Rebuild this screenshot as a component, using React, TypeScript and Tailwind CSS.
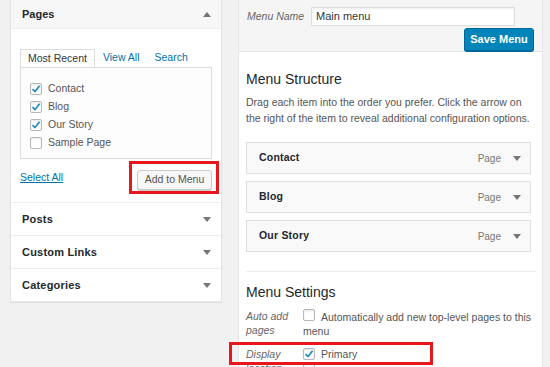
// Ekran edycji menu: lewa kolumna z metaboksami, prawa z menu i ustawieniami.

const FONT = "font-['Liberation_Sans',Arial,sans-serif]";

function Check({ checked = false }: { checked?: boolean }) {
  return (
    <span className="inline-flex h-[12px] w-[12px] shrink-0 items-center justify-center rounded-[2px] border border-[#b4b9be] bg-white shadow-[inset_0_1px_2px_rgba(0,0,0,0.1)]">
      {checked && (
        <svg width="10" height="10" viewBox="0 0 10 10">
          <path d="M1.5 5.2 L4 7.6 L8.6 1.8" fill="none" stroke="#1e8cbe" strokeWidth="1.7" />
        </svg>
      )}
    </span>
  );
}

function Arrow({ up = false }: { up?: boolean }) {
  return (
    <svg width="8" height="5" viewBox="0 0 8 5">
      <polygon points={up ? "0,5 8,5 4,0" : "0,0 8,0 4,5"} fill="#72777c" />
    </svg>
  );
}

const PAGES = [
  { label: "Contact", checked: true },
  { label: "Blog", checked: true },
  { label: "Our Story", checked: true },
  { label: "Sample Page", checked: false },
];

const MENU_ITEMS = ["Contact", "Blog", "Our Story"];

const SECTIONS = ["Posts", "Custom Links", "Categories"];

export default function App() {
  return (
    <div className={`flex h-[367px] w-[550px] gap-[16px] overflow-hidden bg-[#f1f1f1] pl-[10px] ${FONT}`}>
      {/* lewa kolumna */}
      <div className="w-[212px] shrink-0">
        <div className="border border-t-0 border-[#e5e5e5] bg-white shadow-[0_1px_1px_rgba(0,0,0,0.06)]">
          <div className="flex h-[29px] items-center justify-between border-b border-[#eee] bg-[#f7f7f7] pl-[11px] pr-[10px]">
            <h3 className="text-[11px] font-bold text-[#23282d]">Pages</h3>
            <Arrow up />
          </div>
          <div className="px-[9px] pb-[12px] pt-[20px]">
            <div className="flex h-[18px] items-stretch text-[10.5px]">
              <span className="flex items-center border border-b-0 border-[#ddd] bg-white px-[7px] text-[#32373c]">Most Recent</span>
              <span className="ml-[8px] flex items-center text-[#0073aa]">View All</span>
              <span className="ml-[15px] flex items-center text-[#0073aa]">Search</span>
            </div>
            <div className="flex h-[92px] flex-col border border-[#ddd] bg-[#fdfdfd] pl-[9px] pt-[12px]">
              {PAGES.map((p) => (
                <label key={p.label} className="flex h-[18px] items-center gap-[6px] text-[10.5px] text-[#555]">
                  <Check checked={p.checked} />
                  <span>{p.label}</span>
                </label>
              ))}
            </div>
            <div className="mt-[7px] flex items-center justify-between">
              <a className="text-[10.5px] text-[#0073aa] underline">Select All</a>
              <div className="relative">
                <button className="h-[20px] w-[75px] rounded-[3px] border border-[#ccc] bg-[#f7f7f7] text-[10.5px] text-[#555] shadow-[0_1px_0_#ccc]">
                  Add to Menu
                </button>
                <div className="pointer-events-none absolute -bottom-[4px] -left-[8px] -right-[7px] -top-[5px] border-[3px] border-[#e8171c]" />
              </div>
            </div>
          </div>
          {SECTIONS.map((s) => (
            <div key={s} className="flex h-[33px] items-center justify-between border-t border-[#eee] pl-[11px] pr-[10px]">
              <h3 className="text-[11px] font-bold tracking-[0.2px] text-[#23282d]">{s}</h3>
              <Arrow />
            </div>
          ))}
        </div>
      </div>

      {/* prawa kolumna */}
      <div className="flex w-[305px] shrink-0 flex-col border-x border-[#e5e5e5]">
        <div className="h-[58px] border-b border-[#e5e5e5] bg-[#f5f5f5] pl-[8px] pr-[8px] pt-[7px]">
          <div className="flex items-center">
            <span className="w-[64px] text-[10.5px] italic text-[#666]">Menu Name</span>
            <div className="flex h-[19px] w-[204px] items-center border border-[#ddd] bg-white pl-[4px] text-[11px] text-[#32373c] shadow-[inset_0_1px_2px_rgba(0,0,0,0.07)]">
              Main menu
            </div>
          </div>
          <div className="mt-[2px] flex justify-end">
            <button className="h-[23px] w-[70px] rounded-[3px] border border-[#006799] bg-[#0085ba] text-[11px] font-bold text-white shadow-[0_1px_0_#006799]">
              Save Menu
            </button>
          </div>
        </div>
        <div className="flex-1 bg-white pl-[7px] pr-[7px] pt-[17px]">
          <h3 className="text-[14px] leading-[20px] text-[#23282d]">Menu Structure</h3>
          <p className="mt-[5px] text-[10.5px] leading-[16px] text-[#555]">
            Drag each item into the order you prefer. Click the arrow on the right of the item to reveal additional configuration options.
          </p>
          <div className="mt-[16px] flex w-[285px] flex-col gap-[7px]">
            {MENU_ITEMS.map((m) => (
              <div key={m} className="flex h-[32px] items-center justify-between border border-[#dfdfdf] bg-[#f9f9f9] pl-[12px] pr-[9px]">
                <span className="text-[10.5px] font-bold tracking-[0.2px] text-[#23282d]">{m}</span>
                <div className="flex items-center gap-[12px]">
                  <span className="text-[10px] text-[#777]">Page</span>
                  <Arrow />
                </div>
              </div>
            ))}
          </div>
          <div className="mt-[19px] w-[290px] border-t border-[#eee] pt-[10px]">
            <h3 className="text-[14px] leading-[20px] text-[#23282d]">Menu Settings</h3>
            <div className="mt-[7px] flex text-[10.5px] leading-[14px]">
              <span className="w-[57px] shrink-0 italic text-[#666]">Auto add pages</span>
              <div className="text-[#555]">
                <Check />
                <span className="ml-[6px]">Automatically add new top-level pages to this menu</span>
              </div>
            </div>
            <div className="relative mt-[9px] flex text-[10.5px] leading-[14px]">
              <span className="w-[57px] shrink-0 italic text-[#666]">Display location</span>
              <div className="flex flex-col gap-[2px] text-[#555]">
                <div className="flex items-center gap-[6px]">
                  <Check checked />
                  <span>Primary</span>
                </div>
                <div className="flex items-center gap-[6px]">
                  <Check />
                </div>
              </div>
              <div className="pointer-events-none absolute -left-[17px] -top-[5px] h-[23px] w-[204px] border-[3px] border-[#e8171c]" />
            </div>
          </div>
        </div>
      </div>
    </div>
  );
}
